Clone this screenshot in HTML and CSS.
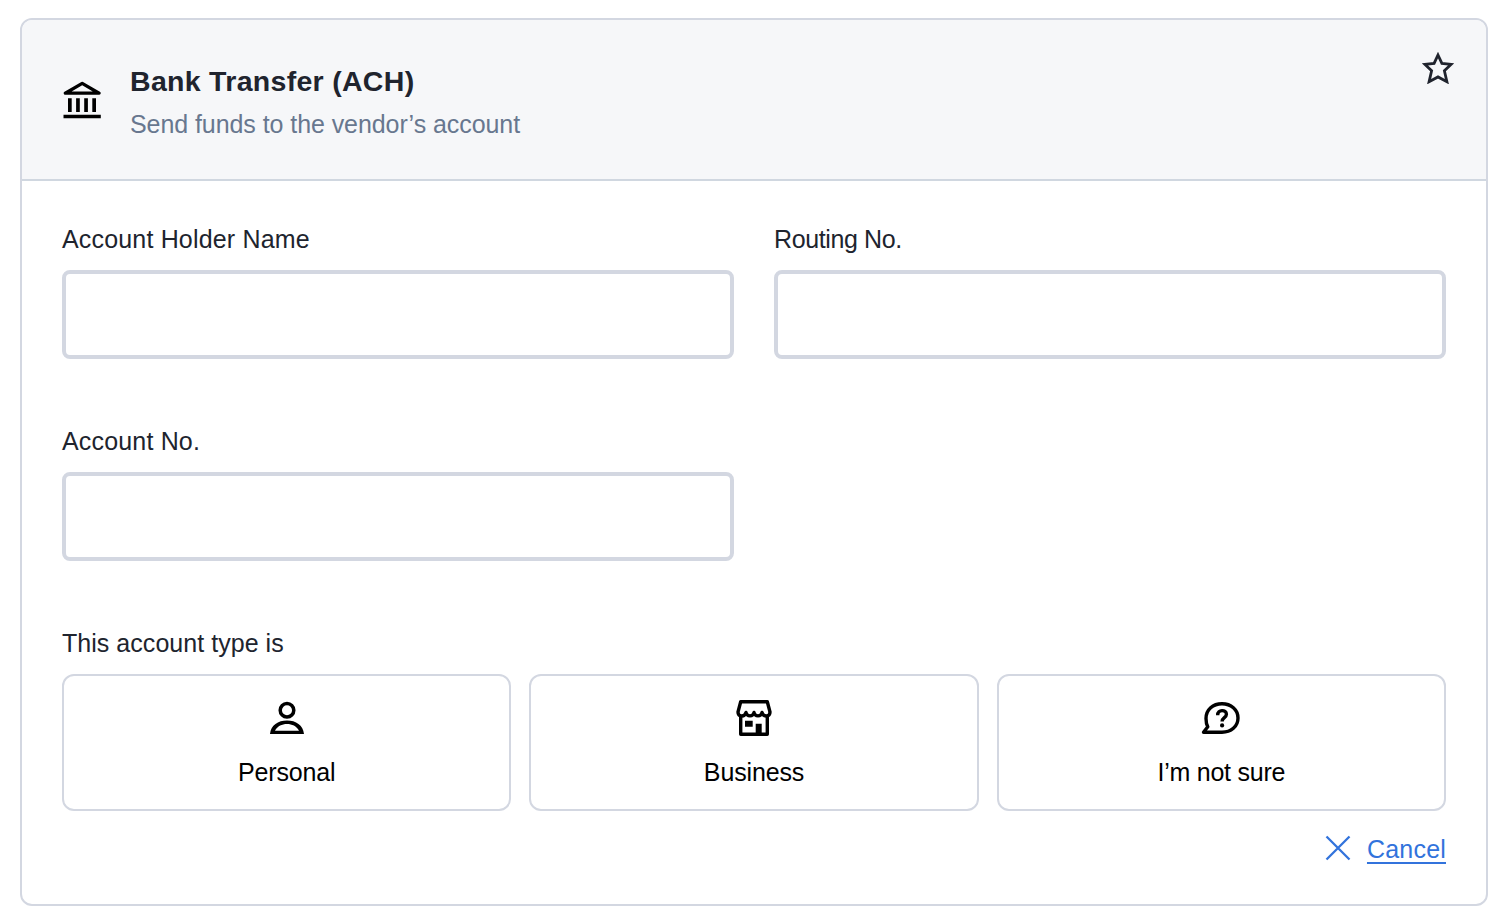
FILE: index.html
```html
<!DOCTYPE html>
<html lang="en">
<head>
<meta charset="utf-8">
<title>Bank Transfer (ACH)</title>
<link rel="stylesheet" href="styles.css">
</head>
<body>
<form class="card">
  <header class="card-header">
    <svg class="icon" viewBox="0 0 40 40" aria-hidden="true">
      <path d="M3.300 13.200 20.200 3.400 37.100 13.200Z" fill="none" stroke="#000" stroke-width="3.300" stroke-linejoin="round"/>
      <path d="M6 18.300h3.700V32H6zM14.100 18.300h3.700V32h-3.700zM22.200 18.300h3.700V32h-3.700zM30.300 18.300H34V32h-3.700zM1.500 34.800h37.300v3.400H1.500z"/>
    </svg>
    <div class="heading">
      <h1 class="title">Bank Transfer (ACH)</h1>
      <p class="subtitle">Send funds to the vendor’s account</p>
    </div>
    <svg class="star" viewBox="0 0 32 32" aria-label="Favorite">
      <path d="M16 3 19.900 11.400 29.200 12.300 22.400 18.800 24.900 29.700 16 24.900 7.100 29.700 9.600 18.800 2.800 12.300 12.100 11.400Z"/>
    </svg>
  </header>
  <div class="card-body">
    <div class="fields">
      <div class="field">
        <label class="label" for="holder">Account Holder Name</label>
        <input class="input" id="holder" type="text">
      </div>
      <div class="field">
        <label class="label label-routing" for="routing">Routing No.</label>
        <input class="input" id="routing" type="text">
      </div>
      <div class="field">
        <label class="label" for="account">Account No.</label>
        <input class="input" id="account" type="text">
      </div>
    </div>
    <div class="field">
      <span class="label label-type">This account type is</span>
      <div class="choices">
        <button class="choice" type="button">
          <svg class="icon" viewBox="0 0 40 40" aria-hidden="true">
            <circle cx="20" cy="12.300" r="6.800" fill="none" stroke="#000" stroke-width="3.500"/>
            <path fill-rule="evenodd" d="M3 36C4 27 11 22.500 20 22.500S36 27 37 36ZM8 32.700H32C29.500 28 25 26 20 26S10.500 28 8 32.700Z"/>
          </svg>
          <span>Personal</span>
        </button>
        <button class="choice" type="button">
          <svg class="icon" viewBox="0 0 40 40" aria-hidden="true">
            <g fill="none" stroke="#000" stroke-width="3.400" stroke-linejoin="round">
              <path d="M6.700 3.700H33.300L36 14C36 19 29.500 19.500 28 14.500C27 19 21 19 20 14.500C19 19 13 19 12 14.500C10.500 19.500 4 19 4 14Z"/>
              <path d="M6.700 18V36.300H33.300V18"/>
            </g>
            <path d="M11 22.700h7.700v6H11zM21.700 25.700h6V36h-6z"/>
          </svg>
          <span>Business</span>
        </button>
        <button class="choice choice-unsure" type="button">
          <svg class="icon" viewBox="0 0 40 40" aria-hidden="true">
            <g fill="none" stroke="#000" stroke-width="3.400" stroke-linejoin="round">
              <path d="M2.500 34.300 6.800 28.800C5.500 26.500 5 23.800 5 20.500C5 11.500 12 5.700 21 5.700S37 11.500 37 20S30 34.300 21 34.300Z"/>
              <path d="M16.700 17.200C16.500 11.300 25.400 11.300 25.400 16.200C25.400 19.800 21.100 19.500 21.100 23.500"/>
            </g>
            <circle cx="21.100" cy="27.400" r="2.100"/>
          </svg>
          <span>I’m not sure</span>
        </button>
      </div>
    </div>
    <div class="actions">
      <svg class="close" viewBox="0 0 26 26" aria-hidden="true"><path d="M1.500 1.500 24.500 24.500M24.500 1.500 1.500 24.500"/></svg>
      <a class="cancel" href="#">Cancel</a>
    </div>
  </div>
</form>
</body>
</html>
```
FILE: styles.css
```css
* { box-sizing: border-box; }

body {
  margin: 0;
  padding: 18px 18px 16px 20px;
  background: #fff;
  color: #20242e;
  font: 25px/30px "Liberation Sans", Arial, sans-serif;
}

.card {
  height: 888px;
  border: 2px solid #d3d7e1;
  border-radius: 12px;
  overflow: hidden;
}

.card-header {
  display: flex;
  align-items: flex-start;
  height: 161px;
  padding: 32px 32px 0 40px;
  background: #f6f7f9;
  border-bottom: 2px solid #d0d7e0;
}

.icon { display: block; width: 40px; height: 40px; }
.card-header .icon { margin-top: 28px; }

.heading { flex: 1; padding-top: 11px; margin-left: 28px; }

.title {
  margin: 0 0 10px;
  font-size: 28.5px;
  line-height: 36px;
  font-weight: 700;
  letter-spacing: 0.3px;
}

.subtitle { margin: 0; color: #68778f; letter-spacing: -0.07px; }

.star {
  width: 32px;
  height: 32px;
  fill: none;
  stroke: #20242e;
  stroke-width: 2.8;
}

.card-body { padding: 43px 40px 0; }

.fields {
  display: grid;
  grid-template-columns: 1fr 1fr;
  gap: 67px 40px;
  margin-bottom: 67px;
}

.field { display: flex; flex-direction: column; gap: 16px; }

.label { letter-spacing: 0.17px; }
.label-routing { letter-spacing: -0.38px; }
.label-type { letter-spacing: 0.04px; }

.input {
  width: 100%;
  height: 89px;
  padding: 0 20px;
  border: 4px solid #d3d7e1;
  border-radius: 8px;
  background: #fff;
  font: inherit;
  outline: none;
}

.choices {
  display: grid;
  grid-template-columns: repeat(3, 1fr);
  gap: 18px;
}

.choice {
  display: flex;
  flex-direction: column;
  align-items: center;
  gap: 19px;
  height: 137px;
  padding: 22px 0 0;
  border: 2px solid #d3d7e1;
  border-radius: 12px;
  background: #fff;
  color: #000;
  font: inherit;
  letter-spacing: -0.15px;
}

.choice-unsure { letter-spacing: -0.25px; }

.actions {
  display: flex;
  justify-content: flex-end;
  gap: 16px;
  margin-top: 23px;
}

.close {
  width: 26px;
  height: 26px;
  margin-top: 1px;
  fill: none;
  stroke: #3273dc;
  stroke-width: 2.3;
}

.cancel {
  color: #3273dc;
  letter-spacing: 0.2px;
  text-decoration: underline 2px;
  text-underline-offset: 4px;
  text-decoration-skip-ink: none;
}
```
